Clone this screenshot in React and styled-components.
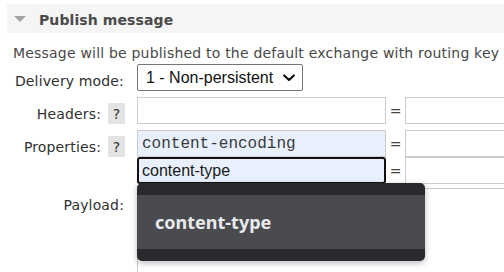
import React from "react";
import styled, { createGlobalStyle } from "styled-components";

const GlobalStyle = createGlobalStyle`
  html, body {
    margin: 0;
    padding: 0;
    overflow: hidden;
    background: #ffffff;
  }
  body {
    font-family: "DejaVu Sans", Verdana, sans-serif;
    font-size: 14px;
    color: #484848;
  }
  * { box-sizing: border-box; }
`;

const Page = styled.div`
  padding: 4px 0 0 7px;
  width: 504px;
  height: 272px;
  overflow: hidden;
`;

const SectionHeader = styled.div`
  display: flex;
  align-items: center;
  height: 29px;
  padding-left: 7px;
  background: #f5f5f5;
  width: 640px;
`;

const Triangle = styled.span`
  display: block;
  width: 0;
  height: 0;
  border-left: 6px solid transparent;
  border-right: 6px solid transparent;
  border-top: 6px solid #a3a3a3;
  margin-right: 13px;
  margin-top: 1px;
`;

const Title = styled.h2`
  margin: 0;
  font-size: 14px;
  font-weight: bold;
  letter-spacing: 0.1px;
  color: #4a4a4a;
  line-height: 16px;
  padding-top: 2px;
`;

const SectionBody = styled.div`
  padding-left: 6px;
`;

const Intro = styled.p`
  margin: 12px 0 3px;
  line-height: 16px;
  letter-spacing: 0.2px;
  white-space: nowrap;
  color: #484848;
`;

const Form = styled.div`
  display: flex;
  flex-direction: column;
  gap: 6px;
`;

const Row = styled.div`
  display: grid;
  grid-template-columns: 124px 1fr;
  align-items: start;
  margin-top: ${(p) => p.$shift || 0}px;
`;

const Label = styled.div`
  display: flex;
  justify-content: flex-end;
  align-items: center;
  height: 21px;
  margin-top: 6px;
  padding-right: ${(p) => (p.$help ? 12 : 13)}px;
  line-height: 16px;
  letter-spacing: 0.15px;
  color: #303030;
  white-space: nowrap;
`;

const Help = styled.span`
  display: flex;
  align-items: center;
  justify-content: center;
  width: 17px;
  height: 21px;
  margin-left: 7px;
  background: #e3e3e3;
  color: #303030;
  font-size: 14px;
`;

const Select = styled.div`
  display: flex;
  align-items: center;
  justify-content: space-between;
  width: 166px;
  height: 27px;
  padding: 0 7px 0 8px;
  border: 1px solid #767676;
  border-radius: 2px;
  background: #fff;
  font-family: "Liberation Sans", Arial, sans-serif;
  font-size: 16px;
  color: #111;
`;

const Pairs = styled.div`
  display: flex;
  flex-direction: column;
`;

const Pair = styled.div`
  display: flex;
  align-items: center;
`;

const KeyWrap = styled.div`
  position: relative;
`;

const KeyInput = styled.input`
  display: block;
  width: 249px;
  height: 27px;
  margin: 0;
  padding: 0 0 0 ${(p) => (p.$focused ? 3 : 4)}px;
  border: ${(p) => (p.$focused ? "2px solid #111111" : "1px solid #cccccc")};
  border-radius: ${(p) => (p.$focused ? 3 : 0)}px;
  background: ${(p) => (p.$filled ? "#e8f0fe" : "#ffffff")};
  font-family: ${(p) =>
    p.$mono ? '"Liberation Mono", "Courier New", monospace' : '"Liberation Sans", Arial, sans-serif'};
  font-size: 16px;
  color: ${(p) => (p.$mono ? "#3a3a3a" : "#1a1a1a")};
  outline: none;
`;

const Eq = styled.span`
  width: 19px;
  text-align: center;
  color: #444;
  font-size: 14px;
`;

const ValueInput = styled.input`
  display: block;
  width: 250px;
  height: 27px;
  margin: 0;
  padding: 0 4px;
  border: 1px solid #cccccc;
  background: #fff;
  outline: none;
`;

const Payload = styled.textarea`
  display: block;
  width: 420px;
  height: 120px;
  margin: 0;
  border: 1px solid #cccccc;
  resize: none;
  outline: none;
`;

const Dropdown = styled.div`
  position: absolute;
  top: 26px;
  left: 0;
  width: 288px;
  padding: 12px 0;
  background: #292a2d;
  border-radius: 5px;
  box-shadow: 0 2px 6px rgba(0, 0, 0, 0.28);
  z-index: 10;
`;

const Option = styled.div`
  display: flex;
  align-items: center;
  height: 54px;
  padding-left: 18px;
  background: ${(p) => (p.$active ? "#4a4b4f" : "transparent")};
  font-family: "Noto Sans", "Open Sans", sans-serif;
  font-size: 18px;
  font-weight: 700;
  color: #e8eaed;
`;

const Chevron = () => (
  <svg width="12" height="8" viewBox="0 0 12 8" aria-hidden="true">
    <polyline points="1.2,1.5 6,6 10.8,1.5" fill="none" stroke="#111" strokeWidth="2.2" strokeLinecap="round" strokeLinejoin="round" />
  </svg>
);

export default function App() {
  return (
    <>
      <GlobalStyle />
      <Page>
        <SectionHeader>
          <Triangle />
          <Title>Publish message</Title>
        </SectionHeader>
        <SectionBody>
          <Intro>Message will be published to the default exchange with routing key</Intro>
          <Form>
            <Row>
              <Label>Delivery mode:</Label>
              <Select>
                <span>1 - Non-persistent</span>
                <Chevron />
              </Select>
            </Row>
            <Row>
              <Label $help>
                Headers:<Help>?</Help>
              </Label>
              <Pairs>
                <Pair>
                  <KeyInput readOnly defaultValue="" />
                  <Eq>=</Eq>
                  <ValueInput readOnly defaultValue="" />
                </Pair>
              </Pairs>
            </Row>
            <Row>
              <Label $help>
                Properties:<Help>?</Help>
              </Label>
              <Pairs>
                <Pair>
                  <KeyInput readOnly $filled $mono defaultValue="content-encoding" />
                  <Eq>=</Eq>
                  <ValueInput readOnly defaultValue="" />
                </Pair>
                <Pair>
                  <KeyWrap>
                    <KeyInput readOnly $filled $focused defaultValue="content-type" />
                    <Dropdown>
                      <Option $active>content-type</Option>
                    </Dropdown>
                  </KeyWrap>
                  <Eq>=</Eq>
                  <ValueInput readOnly defaultValue="" />
                </Pair>
              </Pairs>
            </Row>
            <Row $shift={-2}>
              <Label>Payload:</Label>
              <Payload readOnly defaultValue="" />
            </Row>
          </Form>
        </SectionBody>
      </Page>
    </>
  );
}
